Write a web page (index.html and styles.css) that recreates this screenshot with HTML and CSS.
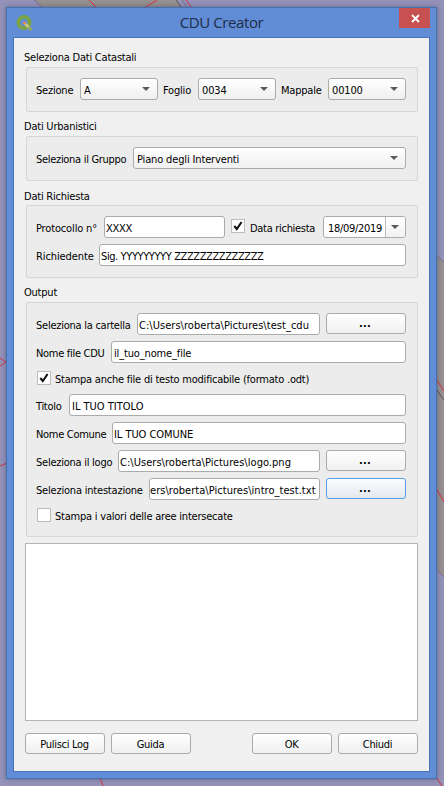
FILE: index.html
```html
<!DOCTYPE html>
<html lang="it">
<head>
<meta charset="utf-8">
<title>CDU Creator</title>
<link rel="stylesheet" href="styles.css">
</head>
<body>
<svg class="map" width="444" height="786" viewBox="0 0 444 786" fill="none">
  <path d="M34 0L43 8H182L177 0Z" fill="#969090"/>
  <path d="M436 255L444 262V577L436 569Z" fill="#969090"/>
  <path d="M34 0L43 8M182 0l6 8M436 255l8 7M436 569l8 8" stroke="#77718f"/>
  <path d="M176 0l6 8M436 389l8 11" stroke="#555"/>
  <path d="M89 0l8 8M157 0l-13 8M186 0l6 8M0 358l6 4l-6 4M0 466l7-3M436 379l8 12M436 488l8 14M100 778l3 8M436 777l6 9" stroke="#d8303c"/>
</svg>
<main class="window">
  <header class="titlebar">
    <svg class="logo" width="18" height="18" viewBox="0 0 18 18" fill="none">
      <circle cx="8" cy="7.5" r="5.6" stroke="#7ba544" stroke-width="3.8"/>
      <path d="M10 9.5l5.5 5.5" stroke="#8fa56c" stroke-width="3.4"/>
      <path d="M8 7.5l4.5 4.5" stroke="#cfc98a" stroke-width="2.4"/>
      <circle cx="8.5" cy="7.8" r="1.5" fill="#e58a48"/>
    </svg>
    <h1>CDU Creator</h1>
    <button class="close" aria-label="Chiudi finestra"><svg width="9" height="9" viewBox="0 0 9 9"><path d="M1 1l7 7M8 1L1 8" stroke="#fff" stroke-width="1.8"/></svg></button>
  </header>
  <div class="client">
    <h2>Seleziona Dati Catastali</h2>
    <section class="group">
      <div class="row">
        <label class="w38">Sezione</label><div class="combo short">A<i></i></div>
        <label class="w28">Foglio</label><div class="combo short">0034<i></i></div>
        <label class="w40">Mappale</label><div class="combo short">00100<i></i></div>
      </div>
    </section>
    <h2>Dati Urbanistici</h2>
    <section class="group">
      <div class="row"><label class="w91">Seleziona il Gruppo</label><div class="combo grow">Piano degli Interventi<i></i></div></div>
    </section>
    <h2 class="low">Dati Richiesta</h2>
    <section class="group">
      <div class="row">
        <label class="w62">Protocollo n°</label><div class="input grow caps protocol">XXXX</div>
        <span class="check"><svg width="10" height="10" viewBox="0 0 10 10"><path d="M1.3 5L3.8 8L8.6 1" fill="none" stroke="#111" stroke-width="2.1"/></svg></span>
        <label class="date-label">Data richiesta</label><div class="date"><span>18/09/2019</span><b><i></i></b></div>
      </div>
      <div class="row"><label class="w57">Richiedente</label><div class="input grow caps">Sig. YYYYYYYYY ZZZZZZZZZZZZZZ</div></div>
    </section>
    <h2>Output</h2>
    <section class="group">
      <div class="row"><label class="w95">Seleziona la cartella</label><div class="input grow path">C:\Users\roberta\Pictures\test_cdu</div><button class="browse">...</button></div>
      <div class="row"><label class="w69">Nome file CDU</label><div class="input grow file">il_tuo_nome_file</div></div>
      <div class="row option">
        <span class="check"><svg width="10" height="10" viewBox="0 0 10 10"><path d="M1.3 5L3.8 8L8.6 1" fill="none" stroke="#111" stroke-width="2.1"/></svg></span>
        <label>Stampa anche file di testo modificabile (formato .odt)</label>
      </div>
      <div class="row"><label class="w27">Titolo</label><div class="input grow heading">IL TUO TITOLO</div></div>
      <div class="row"><label class="w70">Nome Comune</label><div class="input grow">IL TUO COMUNE</div></div>
      <div class="row"><label class="w76">Seleziona il logo</label><div class="input grow path">C:\Users\roberta\Pictures\logo.png</div><button class="browse">...</button></div>
      <div class="row"><label class="w107">Seleziona intestazione</label><div class="input grow path tail">ers\roberta\Pictures\intro_test.txt</div><button class="browse focus">...</button></div>
      <div class="row option"><span class="check"></span><label>Stampa i valori delle aree intersecate</label></div>
    </section>
    <div class="log"></div>
    <footer><button>Pulisci Log</button><button>Guida</button><span class="grow"></span><button>OK</button><button>Chiudi</button></footer>
  </div>
</main>
</body>
</html>
```
FILE: styles.css
```css
* { box-sizing: border-box; }
body {
  margin: 0;
  width: 444px;
  height: 786px;
  overflow: hidden;
  padding: 7px 0 0 6px;
  background: #9492b8;
  font: 11px/14px "DejaVu Sans Condensed", "DejaVu Sans", sans-serif;
  font-stretch: condensed;
  letter-spacing: -0.3px;
  color: #000;
}
.map { position: absolute; left: 0; top: 0; z-index: -1; }
.window {
  width: 431px;
  height: 772px;
  padding: 0 6px 6px;
  border: 1px solid #4571ae;
  background: #618cd6;
  box-shadow: 0 0 5px rgba(40, 40, 80, .45);
}
.titlebar { display: flex; height: 29px; padding-left: 2px; }
.logo { margin: 7px 0 0 1px; flex: none; }
h1 {
  flex: 1;
  margin: 0 0 0 10px;
  font: 15px/29px "Open Sans", sans-serif;
  font-stretch: normal;
  letter-spacing: -0.4px;
  text-align: center;
  color: #1e2d48;
}
.close {
  width: 31px;
  height: 20px;
  border: 0;
  border-radius: 0;
  background: #c75050;
}
.close svg { display: block; margin: 1px auto 0; }
.client {
  width: 417px;
  height: 735px;
  padding: 0 11px;
  border: 1px solid #4a74b8;
  background: #f0f0f0;
}
h2 {
  height: 24px;
  margin: 0 0 0 -1px;
  padding-top: 8px;
  font: inherit;
  letter-spacing: -0.22px;
}
h2.low { padding-top: 9px; }
h2:first-child { height: 29px; padding-top: 13px; }
.group {
  display: flex;
  flex-direction: column;
  gap: 6px;
  margin-left: 1px;
  padding: 10px 11px 11px 9px;
  border: 1px solid #d6d6d6;
  border-radius: 2px;
  background: #ececec;
}
.row { display: flex; gap: 6px; height: 22px; white-space: nowrap; }
.row.option { height: 19px; padding: 2px 0 0 1px; }
label { flex: none; padding-top: 6px; }
.option label { padding-top: 2px; margin-left: -2px; letter-spacing: -0.22px; }
.w38 { width: 38px; letter-spacing: -0.2px; }
.w28 { width: 28px; margin-left: -1px; margin-right: 1px; letter-spacing: -0.2px; }
.w40 { width: 40px; margin-left: -1px; margin-right: 1px; letter-spacing: -0.2px; }
.w91 { width: 91px; }
.w62 { width: 62px; letter-spacing: -0.15px; }
.w57 { width: 57px; letter-spacing: -0.1px; }
.w95 { width: 95px; letter-spacing: -0.25px; }
.w69 { width: 69px; }
.w27 { width: 27px; }
.w70 { width: 70px; }
.w76 { width: 76px; letter-spacing: -0.25px; }
.w107 { width: 107px; letter-spacing: -0.2px; }
.date-label { width: 67px; margin-left: -1px; }
.grow { flex: 1; min-width: 0; }
.combo, .input, .date, button { border: 1px solid #ababab; border-radius: 3px; }
.combo {
  display: flex;
  justify-content: space-between;
  padding: 5px 7px 0 3px;
  background: linear-gradient(#fff, #f0f0f0);
  letter-spacing: -0.15px;
}
i {
  width: 8px;
  height: 4px;
  margin-top: 3px;
  background: #5c5c5c;
  clip-path: polygon(0 0, 100% 0, 50% 100%);
}
.short { width: 78px; }
.input { padding: 5px 1px 0; overflow: hidden; background: #fff; letter-spacing: -0.05px; }
.file { padding-left: 2px; letter-spacing: -0.15px; }
.heading { padding-left: 2px; letter-spacing: 0; }
.caps { letter-spacing: -0.4px; }
.protocol { letter-spacing: -0.3px; }
.path { letter-spacing: 0.04px; }
.tail { padding-left: 0; }
.date { display: flex; width: 83px; background: #fff; overflow: hidden; }
.date span { width: 61px; padding: 5px 0 0 4px; }
.date b { display: flex; width: 20px; padding: 5px 0 0 5px; border-left: 1px solid #bababa; background: linear-gradient(#fff, #f2f2f2); }
.check {
  flex: none;
  width: 14px;
  height: 14px;
  border: 1px solid #bcbcbc;
  background: #fff;
}
.check svg { display: block; margin: 1px; }
.row:not(.option) .check { margin-top: 3px; }
button {
  display: block;
  width: 80px;
  height: 21px;
  padding: 2px 1px 0 0;
  background: linear-gradient(#fff, #f0f0f0);
  font: inherit;
  letter-spacing: inherit;
  color: inherit;
}
.browse { padding: 1px 2px 0 0; font-weight: bold; letter-spacing: 0.3px; }
.close { padding: 0 0 0 1px; }
.focus { border-color: #569de5; background: linear-gradient(#fbfcfd, #e4e9ef); }
.log { height: 178px; margin-top: 6px; border: 1px solid #b4b4b4; background: #fff; }
footer { display: flex; gap: 6px; margin-top: 12px; }
```
